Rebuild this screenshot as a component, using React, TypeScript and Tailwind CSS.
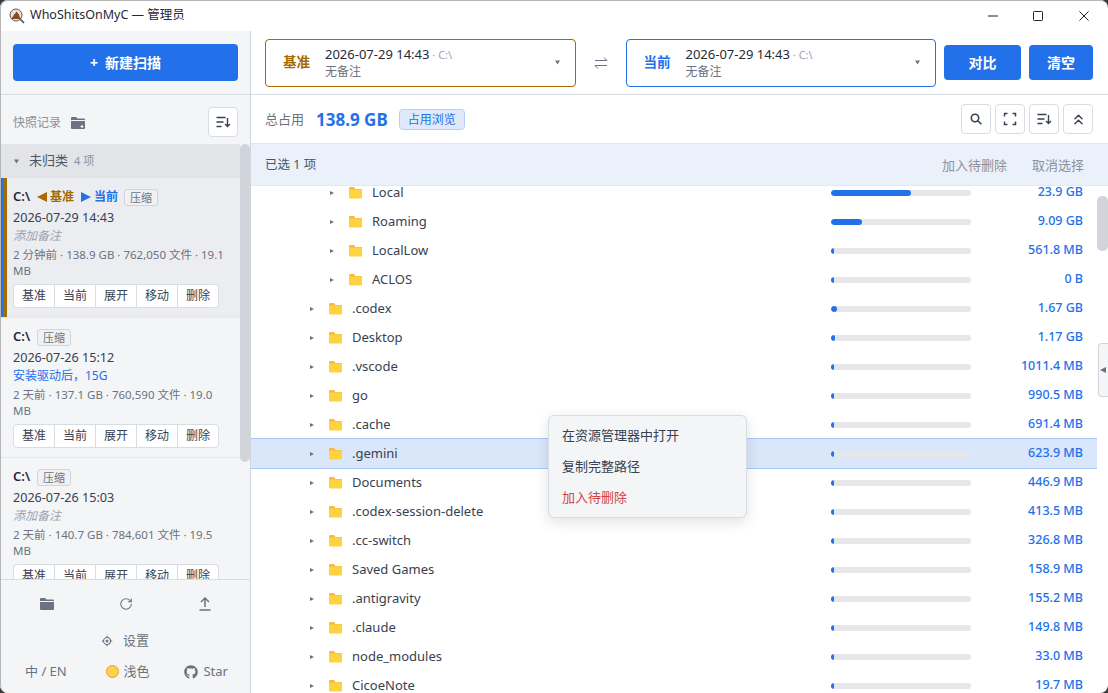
import { ChevronsUp, RotateCw } from 'lucide-react'
import { FaGithub } from 'react-icons/fa'

interface Row {
  name: string
  depth: number
  bar: number
  size: string
  selected?: boolean
}

const rows: Row[] = [
  { name: 'Local', depth: 1, bar: 80, size: '23.9 GB' },
  { name: 'Roaming', depth: 1, bar: 31, size: '9.09 GB' },
  { name: 'LocalLow', depth: 1, bar: 3, size: '561.8 MB' },
  { name: 'ACLOS', depth: 1, bar: 3, size: '0 B' },
  { name: '.codex', depth: 0, bar: 6, size: '1.67 GB' },
  { name: 'Desktop', depth: 0, bar: 4, size: '1.17 GB' },
  { name: '.vscode', depth: 0, bar: 3, size: '1011.4 MB' },
  { name: 'go', depth: 0, bar: 3, size: '990.5 MB' },
  { name: '.cache', depth: 0, bar: 3, size: '691.4 MB' },
  { name: '.gemini', depth: 0, bar: 3, size: '623.9 MB', selected: true },
  { name: 'Documents', depth: 0, bar: 3, size: '446.9 MB' },
  { name: '.codex-session-delete', depth: 0, bar: 3, size: '413.5 MB' },
  { name: '.cc-switch', depth: 0, bar: 3, size: '326.8 MB' },
  { name: 'Saved Games', depth: 0, bar: 3, size: '158.9 MB' },
  { name: '.antigravity', depth: 0, bar: 3, size: '155.2 MB' },
  { name: '.claude', depth: 0, bar: 3, size: '149.8 MB' },
  { name: 'node_modules', depth: 0, bar: 3, size: '33.0 MB' },
  { name: 'CicoeNote', depth: 0, bar: 3, size: '19.7 MB' },
]

const snapshots = [
  { date: '2026-07-29 14:43', note: '添加备注', noted: false, meta: '2 分钟前 · 138.9 GB · 762,050 文件 · 19.1 MB', active: true },
  { date: '2026-07-26 15:12', note: '安装驱动后，15G', noted: true, meta: '2 天前 · 137.1 GB · 760,590 文件 · 19.0 MB', active: false },
  { date: '2026-07-26 15:03', note: '添加备注', noted: false, meta: '2 天前 · 140.7 GB · 784,601 文件 · 19.5 MB', active: false },
]

function Caret({ dir, size = 5, color = '#6b7280' }: { dir: 'down' | 'left' | 'right'; size?: number; color?: string }) {
  const points = dir === 'down' ? '0,1 10,1 5,9' : dir === 'left' ? '10,0 10,10 0,5' : '0,0 10,5 0,10'
  return (
    <svg width={size} height={size} viewBox="0 0 10 10" className="shrink-0">
      <polygon points={points} fill={color} />
    </svg>
  )
}

function SortIcon() {
  return (
    <svg width="16" height="16" viewBox="0 0 16 16" fill="none" stroke="#374151" strokeWidth="1.4">
      <path d="M1.5 3.5h9M1.5 8h7M1.5 12.5h5M12.5 4v8.5M10 10l2.5 2.5L15 10" />
    </svg>
  )
}

function FolderIcon() {
  return (
    <svg width="13" height="13" viewBox="0 0 13 13" className="shrink-0">
      <path d="M0 2a1 1 0 0 1 1-1h4l1.5 2H13v2H0z" fill="#fdb544" />
      <path d="M0 3.500h13v8a1 1 0 0 1-1 1H1a1 1 0 0 1-1-1z" fill="#ffd23f" />
    </svg>
  )
}

function SolidFolder({ badge = false }: { badge?: boolean }) {
  return (
    <svg width="16" height="16" viewBox="0 0 16 16" fill="#6b7280">
      <path d="M1 3a1 1 0 0 1 1-1h4l1.500 1.500H14a1 1 0 0 1 1 1V5H1z" />
      <path d="M1 6h14v7a1 1 0 0 1-1 1H2a1 1 0 0 1-1-1z" />
      {badge && <path d="M10.500 11.500h3M12 10v3" stroke="#f4f5f7" strokeWidth="1.200" />}
    </svg>
  )
}

function Logo() {
  return (
    <svg width="16" height="16" viewBox="0 0 16 16" className="shrink-0">
      <circle cx="7" cy="7" r="6" fill="#e8e4e0" stroke="#5b5b5b" strokeWidth="1" />
      <path d="M3 11c-.500-1.500.500-2.500 1.500-2.800C4.300 7 5.400 6.200 6.200 5.600 6.500 4.600 7.200 3.600 8 3.200c0 1 .6 1.800 1.200 2.400.6.600 1.200 1.400 1 2.600 1 .400 1.300 1.600.800 2.800z" fill="#8b4a1f" />
      <path d="M11 11l4 4" stroke="#4b4b4b" strokeWidth="1.600" />
    </svg>
  )
}

function SnapshotCard({ item }: { item: (typeof snapshots)[number] }) {
  return (
    <div className={`relative h-[140px] border-b border-[#e5e7eb] pl-[13px] pr-[10px] pt-[10px] ${item.active ? 'bg-[#ecedf1]' : ''}`}>
      {item.active && (
        <div className="absolute bottom-0 left-0 top-0 flex w-[7px]">
          <div className="w-[2.500px] bg-[#2271ea]" />
          <div className="flex-1 bg-[#a56a00]" />
        </div>
      )}
      <div className="flex h-[18px] items-center gap-[6px] text-[13px]">
        <span className="w-[18px] font-semibold text-[#1f2937]">C:\</span>
        {item.active && (
          <>
            <span className="flex items-center gap-[3px] text-[12px] font-bold text-[#a56a00]">
              <Caret dir="left" size={10} color="#a56a00" />
              基准
            </span>
            <span className="ml-px flex items-center gap-[3px] text-[12px] font-bold text-[#2271ea]">
              <Caret dir="right" size={10} color="#2271ea" />
              当前
            </span>
          </>
        )}
        <span className="rounded-[3px] border border-[#d1d5db] bg-[#f0f1f3] px-[5px] text-[11px] leading-[15px] text-[#6b7280]">压缩</span>
      </div>
      <div className="mt-[3px] text-[12.600px] leading-[18px] text-[#374151]">{item.date}</div>
      <div className={`-mt-px text-[12px] leading-[19px] ${item.noted ? 'text-[#2271ea]' : 'italic text-[#9ca3af]'}`}>{item.note}</div>
      <div className="mt-[2px] text-[11.500px] leading-[16px] text-[#6b7280]">{item.meta}</div>
      <div className="mt-[5px] flex w-[206px] overflow-hidden rounded-[4px] border border-[#d8dce3] bg-white">
        {['基准', '当前', '展开', '移动', '删除'].map((label, idx) => (
          <div key={label} className={`flex h-[22px] flex-1 items-center justify-center text-[12px] text-[#374151] ${idx > 0 ? 'border-l border-[#d8dce3]' : ''}`}>
            {label}
          </div>
        ))}
      </div>
    </div>
  )
}

function Sidebar() {
  return (
    <div className="flex h-full w-[251px] shrink-0 flex-col border-r border-[#d1d5db] bg-[#f4f5f7]">
      <div className="h-[64px] shrink-0 border-b border-[#d8dce3] pl-[13px] pr-[12px] pt-[13px]">
        <button className="flex h-[37px] w-full items-center justify-center gap-[7px] rounded-[4px] bg-[#2271ea] text-[14px] font-bold text-white">
          <span>+</span>
          <span>新建扫描</span>
        </button>
      </div>
      <div className="flex h-[49px] shrink-0 items-center justify-between pl-[13px] pr-[12px] pt-[5px]">
        <div className="mt-px flex items-center gap-[9px] text-[12px] text-[#8b919b]">
          <span>快照记录</span>
          <SolidFolder badge />
        </div>
        <button className="flex h-[30px] w-[30px] items-center justify-center rounded-[4px] border border-[#d8dce3] bg-white">
          <SortIcon />
        </button>
      </div>
      <div className="relative min-h-0 flex-1 overflow-hidden">
        <div className="mr-[10px]">
          <div className="flex h-[34px] items-center bg-[#e2e4e8] pl-[14px] text-[13px] text-[#4b5563]">
            <span className="mr-[10px]">
              <Caret dir="down" size={5} />
            </span>
            <span>未归类</span>
            <span className="ml-[6px] text-[11px] text-[#8b919b]">4 项</span>
          </div>
          {snapshots.map(item => (
            <SnapshotCard key={item.date} item={item} />
          ))}
        </div>
        <div className="absolute bottom-0 right-0 top-0 w-[10px] bg-[#f4f5f7]">
          <div className="h-[318px] rounded-[5px] bg-[#d1d5db]" />
        </div>
      </div>
      <div className="h-[114px] shrink-0 border-t border-[#d8dce3] text-[#6b7280]">
        <div className="flex h-[48px] items-center justify-between pl-[39px] pr-[37px]">
          <SolidFolder />
          <RotateCw size={14} strokeWidth={1.800} />
          <svg width="16" height="16" viewBox="0 0 16 16" fill="none" stroke="#6b7280" strokeWidth="1.500">
            <path d="M8 11V2M4 6l4-4 4 4M2.500 14h11" />
          </svg>
        </div>
        <div className="mt-[3px] flex h-[20px] items-center justify-center gap-[10px] text-[13px]">
          <svg width="12" height="12" viewBox="0 0 12 12" fill="none" stroke="#6b7280" strokeWidth="1.100">
            <circle cx="6" cy="6" r="3.500" />
            <circle cx="6" cy="6" r="1" />
            <path d="M6 .8v1.400M6 9.800v1.400M.8 6h1.400M9.800 6h1.400" />
          </svg>
          <span>设置</span>
        </div>
        <div className="mt-[11px] flex items-center justify-between pl-[25px] pr-[22px] text-[13px]">
          <span>中 / EN</span>
          <span className="ml-[4px] flex items-center gap-[5px]">
            <span className="h-[13px] w-[13px] rounded-full border border-[#fb923c] bg-[#fcd34d]" />
            浅色
          </span>
          <span className="flex items-center gap-[5px]">
            <FaGithub size={14} />
            Star
          </span>
        </div>
      </div>
    </div>
  )
}

function Selector({ label, tone }: { label: string; tone: 'base' | 'current' }) {
  const base = tone === 'base'
  return (
    <div className={`flex h-[48px] flex-1 items-center rounded-[4px] border bg-white pl-[17px] pr-[15px] ${base ? 'border-[#a56a00]' : 'border-[#2271ea]'}`}>
      <span className={`w-[42px] text-[13.500px] font-bold ${base ? 'text-[#a56a00]' : 'text-[#2271ea]'}`}>{label}</span>
      <div className="flex-1 leading-[17px]">
        <div>
          <span className="text-[13px] text-[#1f2937]">2026-07-29 14:43</span>
          <span className="text-[11px] text-[#9ca3af]"> · C:\</span>
        </div>
        <div className="text-[12px] text-[#6b7280]">无备注</div>
      </div>
      <Caret dir="down" size={5} />
    </div>
  )
}

function ToolButton({ children }: { children: React.ReactNode }) {
  return <button className="flex h-[30px] w-[30px] items-center justify-center rounded-[4px] border border-[#d8dce3] bg-white text-[#374151]">{children}</button>
}

function TreeRow({ row }: { row: Row }) {
  return (
    <div className={`relative flex h-[29px] shrink-0 items-center text-[13px] ${row.selected ? 'bg-[#dae6fa] shadow-[0_-1px_0_#a8c6f8,0_1px_0_#a8c6f8]' : ''}`}>
      <div className={`flex min-w-0 flex-1 items-center ${row.depth === 1 ? 'pl-[79px]' : 'pl-[59px]'}`}>
        <span className="w-[19px]">
          <Caret dir="right" size={4} />
        </span>
        <FolderIcon />
        <span className="ml-[10px] text-[#374151]">{row.name}</span>
      </div>
      <div className="h-[6px] w-[140px] overflow-hidden rounded-[3px] bg-[#e5e7eb]">
        <div className="h-full rounded-[3px] bg-[#2271ea]" style={{ width: row.bar }} />
      </div>
      <div className="w-[126px] pr-[14px] text-right text-[12.500px] font-medium text-[#2271ea]">{row.size}</div>
    </div>
  )
}

function Main() {
  return (
    <div className="relative flex min-w-0 flex-1 flex-col">
      <div className="flex h-[64px] shrink-0 items-center gap-[8px] border-b border-[#d8dce3] pl-[14px] pr-[15px]">
        <div className="flex flex-1 items-center">
          <Selector label="基准" tone="base" />
          <svg width="50" height="14" viewBox="0 0 50 14" fill="none" stroke="#6b7280" strokeWidth="1" className="shrink-0">
            <path d="M19 4.500h12M28 1.500l3 3M31 9.500H19M22 12.500l-3-3" />
          </svg>
          <Selector label="当前" tone="current" />
        </div>
        <button className="h-[35px] w-[77px] rounded-[4px] bg-[#2271ea] text-[14px] font-bold text-white">对比</button>
        <button className="h-[35px] w-[64px] rounded-[4px] bg-[#2271ea] text-[14px] font-bold text-white">清空</button>
      </div>
      <div className="flex h-[48px] shrink-0 items-center pl-[14px] pr-[15px]">
        <span className="mt-[2px] text-[13px] text-[#6b7280]">总占用</span>
        <span className="ml-[12px] mt-[2px] text-[17px] font-bold text-[#2271ea]">138.9 GB</span>
        <span className="ml-[11px] mt-px rounded-[4px] border border-[#b6cff7] bg-[#dfe9fb] px-[8px] text-[12px] leading-[19px] text-[#2271ea]">占用浏览</span>
        <div className="ml-auto flex gap-[4px]">
          <ToolButton>
            <svg width="12" height="12" viewBox="0 0 12 12" fill="none" stroke="#374151" strokeWidth="1.600">
              <circle cx="5" cy="5" r="3.700" />
              <path d="M7.800 7.800L11.300 11.300" />
            </svg>
          </ToolButton>
          <ToolButton>
            <svg width="14" height="14" viewBox="0 0 14 14" fill="none" stroke="#374151" strokeWidth="1.500">
              <path d="M1.500 4.500V1.500h3M9.500 1.500h3v3M12.500 9.500v3h-3M4.500 12.500h-3v-3" />
            </svg>
          </ToolButton>
          <ToolButton>
            <SortIcon />
          </ToolButton>
          <ToolButton>
            <ChevronsUp size={17} strokeWidth={2} />
          </ToolButton>
        </div>
      </div>
      <div className="flex h-[43px] shrink-0 items-center border-y border-[#e5e7eb] bg-[#eaf1fb] pl-[14px] pr-[24px] pt-[2px] text-[13px]">
        <span className="text-[12.500px] text-[#4b5563]">已选 1 项</span>
        <span className="ml-auto text-[#8b919b]">加入待删除</span>
        <span className="ml-[25px] text-[#8b919b]">取消选择</span>
      </div>
      <div className="relative min-h-0 flex-1 overflow-hidden">
        <div className="-mt-[8px] mr-[11px] flex flex-col">
          {rows.map(row => (
            <TreeRow key={row.name} row={row} />
          ))}
        </div>
        <div className="absolute right-0 top-[10px] h-[55px] w-[11px] rounded-[5px] bg-[#d1d5db]" />
        <div className="absolute right-0 top-[157px] flex h-[54px] w-[10px] items-center rounded-l-[4px] border border-r-0 border-[#d1d5db] bg-[#f4f5f7] pl-[1px]">
          <Caret dir="left" size={6} />
        </div>
      </div>
      <div className="absolute left-[297px] top-[384px] w-[199px] rounded-[6px] border border-[#d8dce3] bg-[#f4f5f7] py-[4px] text-[13px] shadow-[0_4px_14px_rgba(0,0,0,0.12)]">
        <div className="flex h-[31px] items-center pl-[13px] text-[#374151]">在资源管理器中打开</div>
        <div className="flex h-[31px] items-center pl-[13px] text-[#374151]">复制完整路径</div>
        <div className="flex h-[31px] items-center pl-[13px] text-[#cf4444]">加入待删除</div>
      </div>
    </div>
  )
}

export default function App() {
  return (
    <div className="relative h-[693px] w-[1108px] overflow-hidden bg-[#3a3a3a] font-['Noto_Sans','Noto_Sans_CJK_SC',sans-serif]">
      <div className="flex h-full flex-col overflow-hidden rounded-[8px] bg-white">
        <div className="flex h-[31px] shrink-0 items-center pl-[9px] text-[12.500px] text-[#1f2937]">
          <Logo />
          <span className="ml-[5px]">WhoShitsOnMyC — 管理员</span>
          <div className="ml-auto flex items-center gap-[35px] pr-[19px]">
            <svg width="10" height="10" viewBox="0 0 11 11" stroke="#1f1f1f" strokeWidth="1.100" fill="none">
              <path d="M0 5.500h11" />
            </svg>
            <svg width="10" height="10" viewBox="0 0 11 11" stroke="#1f1f1f" strokeWidth="1.100" fill="none">
              <rect x=".5" y=".5" width="10" height="10" rx="1" />
            </svg>
            <svg width="10" height="10" viewBox="0 0 11 11" stroke="#1f1f1f" strokeWidth="1.100" fill="none" className="ml-px">
              <path d="M.5.500l10 10M10.500.500l-10 10" />
            </svg>
          </div>
        </div>
        <div className="flex min-h-0 flex-1">
          <Sidebar />
          <Main />
        </div>
      </div>
      <div className="pointer-events-none absolute inset-0 rounded-[8px] border-l border-t border-[#b5b5b5]" />
    </div>
  )
}
